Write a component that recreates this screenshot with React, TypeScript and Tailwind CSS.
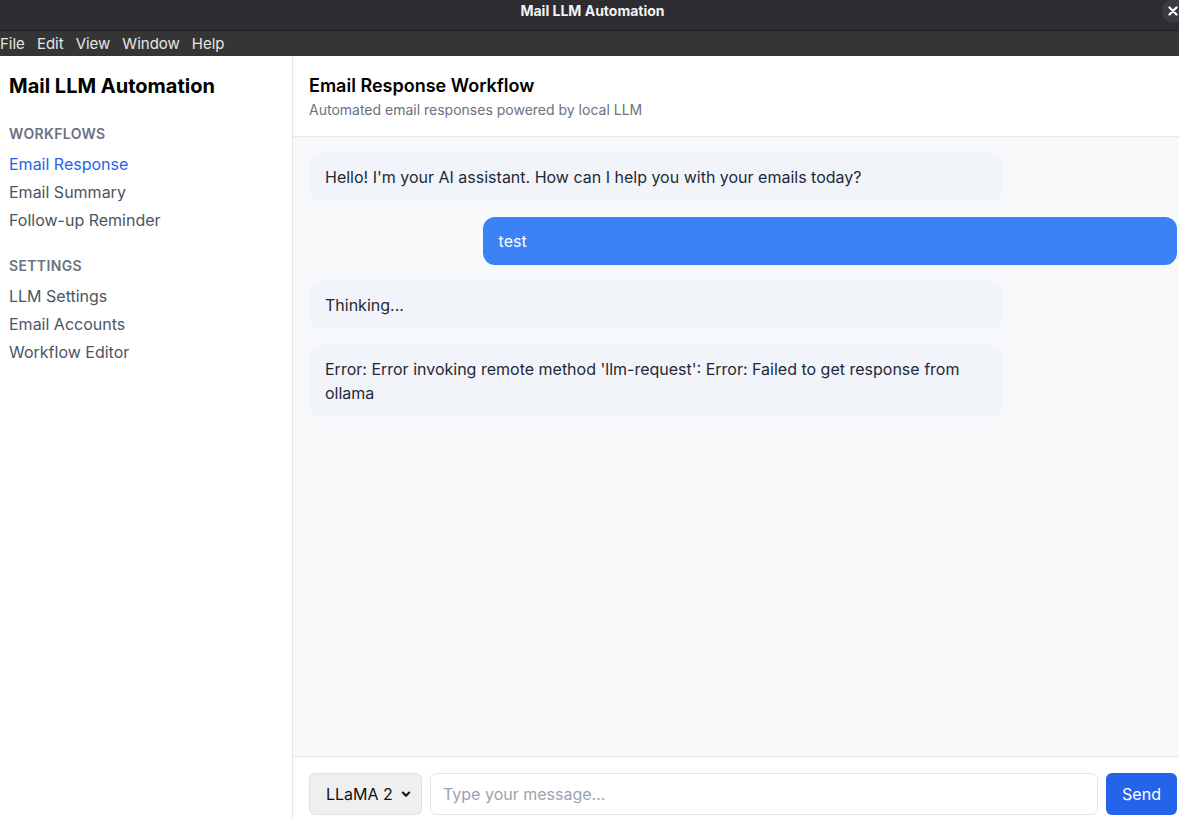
import React from "react";

const font = { fontFamily: "Inter, 'Noto Sans', sans-serif" };

function TitleBar() {
  return (
    <div className="relative flex h-[31px] w-full items-start justify-center bg-[#2c2c31] border-b border-[#1c1c20] pt-[2px]">
      <span className="pl-[6px] text-[14px] leading-[18px] font-bold text-[#f2f2f2]">Mail LLM Automation</span>
      <div className="absolute left-[1162px] top-[-1px] flex h-[24px] w-[24px] items-center justify-center rounded-full bg-[#3b3b41]">
        <svg width="10" height="10" viewBox="0 0 10 10" className="-ml-[2px]">
          <path d="M1.5 1.5 L8.5 8.5 M8.5 1.5 L1.5 8.5" stroke="#ffffff" strokeWidth="2.2" strokeLinecap="round" />
        </svg>
      </div>
    </div>
  );
}

function MenuBar() {
  return (
    <div className="flex h-[25px] items-center gap-[12px] bg-[#353535] pt-[2px] text-[15px] text-[#e6e6e6]">
      <span>File</span>
      <span>Edit</span>
      <span>View</span>
      <span>Window</span>
      <span>Help</span>
    </div>
  );
}

function Sidebar() {
  return (
    <aside className="flex w-[293px] shrink-0 flex-col border-r border-[#e5e7eb] bg-white pl-[9px] pt-4">
      <h1 className="mb-6 text-[20px] leading-[28px] font-bold text-black">Mail LLM Automation</h1>
      <div className="mb-6">
        <div className="mb-2 text-[14px] leading-[20px] font-semibold uppercase tracking-wide text-[#6b7280]">Workflows</div>
        <div className="flex flex-col gap-1 text-[16px] leading-[24px] text-[#4b5563]">
          <span className="text-[#2563eb]">Email Response</span>
          <span>Email Summary</span>
          <span>Follow-up Reminder</span>
        </div>
      </div>
      <div>
        <div className="mb-2 text-[14px] leading-[20px] font-semibold uppercase tracking-wide text-[#6b7280]">Settings</div>
        <div className="flex flex-col gap-1 text-[16px] leading-[24px] text-[#4b5563]">
          <span>LLM Settings</span>
          <span>Email Accounts</span>
          <span>Workflow Editor</span>
        </div>
      </div>
    </aside>
  );
}

function Bubble({ children, user }: { children: React.ReactNode; user?: boolean }) {
  return (
    <div className={user ? "flex justify-end" : "flex justify-start"}>
      <div
        className={
          "w-[80%] rounded-xl px-4 py-3 text-[16px] leading-[24px] " +
          (user ? "bg-[#3b82f6] text-white" : "bg-[#f1f4f9] text-[#1f2937]")
        }
      >
        {children}
      </div>
    </div>
  );
}

function Main() {
  return (
    <main className="flex flex-1 flex-col">
      <header className="border-b border-[#e5e7eb] bg-white p-4">
        <h2 className="text-[18px] leading-[28px] font-semibold text-black">Email Response Workflow</h2>
        <p className="text-[14px] leading-[20px] text-[#6b7280]">Automated email responses powered by local LLM</p>
      </header>
      <div className="flex flex-1 flex-col gap-4 bg-[#f8f9fb] p-4">
        <Bubble>Hello! I'm your AI assistant. How can I help you with your emails today?</Bubble>
        <Bubble user>test</Bubble>
        <Bubble>Thinking...</Bubble>
        <Bubble>Error: Error invoking remote method 'llm-request': Error: Failed to get response from ollama</Bubble>
      </div>
      <div className="flex gap-2 border-t border-[#e5e7eb] bg-white p-4">
        <div className="flex h-[42px] w-[113px] items-center justify-between rounded-md border border-[#e0e0e0] bg-[#efefef] pl-4 pr-[10px] text-[16px] text-[#111]">
          <span>LLaMA 2</span>
          <svg width="10" height="10" viewBox="0 0 10 10">
            <path d="M1.8 3.5 L5 6.7 L8.2 3.5" stroke="#111" strokeWidth="2" fill="none" strokeLinecap="round" strokeLinejoin="round" />
          </svg>
        </div>
        <div className="flex h-[42px] flex-1 items-center rounded-md border border-[#e5e7eb] bg-white px-3 text-[16px] text-[#9ca3af]">
          Type your message...
        </div>
        <div className="flex h-[42px] w-[71px] items-center justify-center rounded-md bg-[#2563eb] text-[16px] text-white">
          Send
        </div>
      </div>
    </main>
  );
}

export default function App() {
  return (
    <div className="h-[819px] w-[1179px] overflow-hidden bg-white" style={font}>
      <TitleBar />
      <MenuBar />
      <div className="flex h-[775px] w-[1193px]">
        <Sidebar />
        <Main />
      </div>
    </div>
  );
}
